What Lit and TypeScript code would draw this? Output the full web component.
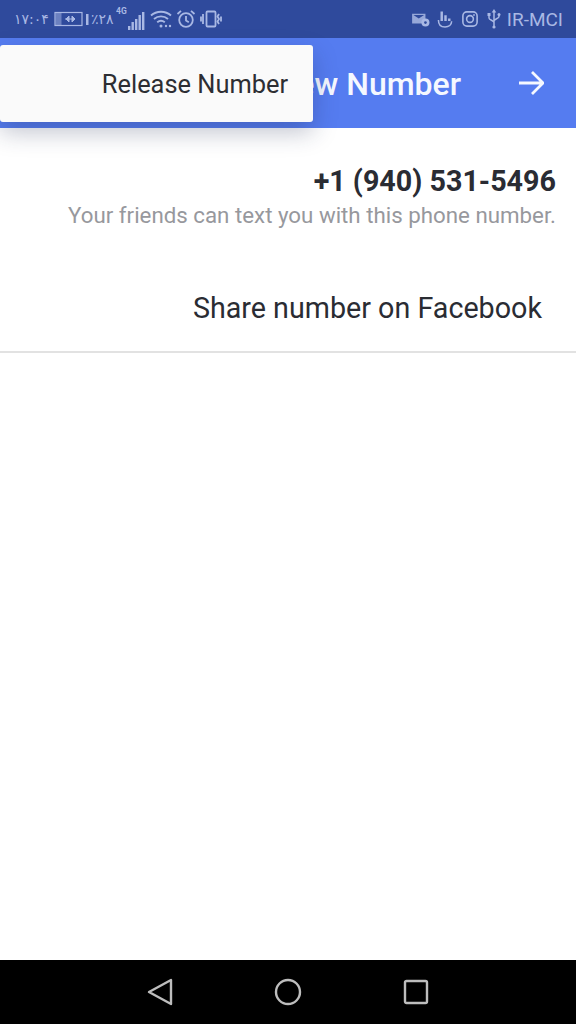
import { LitElement, html, css } from 'lit';
import { customElement } from 'lit/decorators.js';

@customElement('app-root')
export class AppRoot extends LitElement {
    static styles = css`
        :host {
            display: block;
            width: 576px;
            height: 1024px;
            font-family: Roboto, sans-serif;
        }

        * {
            box-sizing: border-box;
        }

        .page {
            position: relative;
            display: flex;
            flex-direction: column;
            height: 1024px;
            overflow: hidden;
            background: #fff;
        }

        .status {
            display: flex;
            align-items: center;
            justify-content: space-between;
            height: 38px;
            padding: 0 13px 0 14px;
            background: #2f4a9c;
            color: #a9b8e4;
        }

        .status svg {
            display: block;
            flex: none;
        }

        .group {
            display: flex;
            align-items: center;
        }

        .digits {
            font-family: 'DejaVu Sans', sans-serif;
            font-size: 14px;
            white-space: nowrap;
        }

        .time {
            width: 31px;
            margin-right: 9px;
            letter-spacing: -0.6px;
        }

        .pct {
            width: 24px;
            margin-left: 1px;
            letter-spacing: -0.5px;
        }

        .carrier {
            font-size: 19px;
            margin-left: 6px;
        }

        .appbar {
            display: flex;
            align-items: center;
            justify-content: flex-end;
            height: 90px;
            padding: 2px 32px 0 0;
            background: #557cf0;
            color: #f5f8ff;
        }

        .appbar h1 {
            margin: 0 57px 0 0;
            font-size: 32px;
            font-weight: 500;
        }

        .appbar svg {
            margin-top: -2px;
        }

        .content {
            flex: 1;
            background: #fff;
        }

        .info {
            padding: 34px 20px 0 0;
            text-align: right;
        }

        .phone {
            font-size: 28.7px;
            font-weight: 700;
            line-height: 38px;
            color: #2a2c33;
        }

        .hint {
            font-size: 22.3px;
            line-height: 30px;
            color: #97989d;
        }

        .share {
            display: flex;
            align-items: center;
            justify-content: flex-end;
            height: 95px;
            margin-top: 28px;
            padding: 6px 34px 0 0;
            border-bottom: 2px solid #e2e2e2;
            font-size: 28.7px;
            color: #2a2c33;
        }

        .nav {
            display: flex;
            align-items: center;
            justify-content: center;
            gap: 101px;
            height: 64px;
            background: #000;
        }

        .menu {
            position: absolute;
            top: 45px;
            left: 0;
            display: flex;
            align-items: center;
            justify-content: flex-end;
            width: 313px;
            height: 77px;
            padding: 0 25px 0 0;
            border-radius: 3px;
            background: #fafafa;
            box-shadow: 0 10px 24px rgba(30, 40, 80, 0.28);
            font-size: 25.4px;
            color: #2d2e33;
        }
    `;

    render() {
        return html`
            <div class="page">
                <div class="status">
                    <div class="group">
                        <span class="digits time">۱۷:۰۴</span>
                        <svg width="30" height="16" viewBox="0 0 30 16" fill="none" stroke="currentColor">
                            <rect x="1" y="1.500" width="27" height="13" stroke-width="1.200" />
                            <rect x="1.500" y="2" width="6" height="12" fill="currentColor" stroke="none" opacity=".5" />
                            <path d="M11 8h10M15 5l-3 3 3 3zM18 5l3 3-3 3z" fill="currentColor" stroke-width="1" />
                        </svg>
                        <svg width="5" height="16" viewBox="0 0 5 16" style="margin-left:1px">
                            <rect x="1" y="3" width="2.500" height="11" fill="currentColor" />
                        </svg>
                        <span class="digits pct">٪۲۸</span>
                        <svg width="30" height="26" viewBox="0 0 30 26" fill="currentColor" style="margin-left:1px">
                            <text x="0" y="8" font-size="8.500" font-weight="700" font-family="Roboto">4G</text>
                            <rect x="12" y="20" width="2.400" height="4" />
                            <rect x="15.500" y="16" width="2.400" height="8" />
                            <rect x="19" y="13" width="2.400" height="11" />
                            <rect x="22.500" y="9" width="2.400" height="15" />
                            <rect x="26" y="6" width="2.400" height="18" />
                        </svg>
                        <svg width="22" height="20" viewBox="0 0 22 20" fill="none" stroke="currentColor" stroke-width="1.900" style="margin-left:4px">
                            <path d="M1 6.500C6.500 1.500 15.500 1.500 21 6.500M4 10c4-3.500 10-3.500 14 0M7.200 13.200c2.200-1.800 5.400-1.800 7.600 0" />
                            <circle cx="11" cy="17" r="1.500" fill="currentColor" stroke="none" />
                            <circle cx="16" cy="17" r="1.200" fill="currentColor" stroke="none" />
                            <circle cx="20" cy="17" r="1.200" fill="currentColor" stroke="none" />
                        </svg>
                        <svg width="20" height="20" viewBox="0 0 20 20" fill="none" stroke="currentColor" stroke-width="1.800" style="margin-left:4px">
                            <circle cx="10" cy="11" r="6.800" />
                            <path d="M10 7v4.500l2.800 1.700M1.500 5L5 1.800M18.500 5L15 1.800" />
                        </svg>
                        <svg width="22" height="18" viewBox="0 0 22 18" fill="none" stroke="currentColor" stroke-width="1.800" style="margin-left:4px">
                            <rect x="6.500" y="1.500" width="9" height="15" rx="1" />
                            <path d="M3 4v10M1 6.500v5M19 4l-1.500 2.500L19 9l-1.500 2.500L19 14M21 6.500v5" />
                        </svg>
                    </div>
                    <div class="group">
                        <svg width="18" height="16" viewBox="0 0 20 18" fill="currentColor">
                            <path d="M0 3h15v6.500a5 5 0 0 0-4 4.500H0zM1.500 4.500l6 4 6-4" opacity=".85" />
                            <circle cx="15" cy="13" r="4.500" />
                            <circle cx="15" cy="13" r="1.500" fill="#2f4a9c" />
                        </svg>
                        <svg width="17" height="22" viewBox="0 0 18 22" fill="none" stroke="currentColor" stroke-width="1.600" style="margin-left:7px">
                            <path d="M1.500 12c0 5 3 7.500 7 7.500s7-2.500 7-6" />
                            <path d="M5 3v10M9 7v6M13 10.500v2.500" stroke-width="2.600" />
                        </svg>
                        <svg width="16" height="16" viewBox="0 0 18 18" fill="none" stroke="currentColor" stroke-width="1.800" style="margin-left:8px">
                            <rect x="1" y="1" width="16" height="16" rx="4.500" />
                            <circle cx="9" cy="9" r="3.800" />
                            <circle cx="13.500" cy="4.500" r="1" fill="currentColor" stroke="none" />
                        </svg>
                        <svg width="14" height="20" viewBox="0 0 14 20" fill="none" stroke="currentColor" stroke-width="1.500" style="margin-left:9px">
                            <path d="M7 3v15M2 6v3c0 2 5 2.500 5 4.500M12 6v1.500c0 2-5 2.500-5 4.500" />
                            <path d="M7 0l2.300 3.500H4.700z" fill="currentColor" stroke="none" />
                            <circle cx="7" cy="18" r="1.600" fill="currentColor" stroke="none" />
                            <rect x=".5" y="4" width="3" height="3" fill="currentColor" stroke="none" />
                            <circle cx="12" cy="5.500" r="1.500" fill="currentColor" stroke="none" />
                        </svg>
                        <span class="carrier">IR-MCI</span>
                    </div>
                </div>
                <div class="appbar">
                    <h1>New Number</h1>
                    <svg width="26" height="26" viewBox="0 0 26 26" fill="none" stroke="currentColor" stroke-width="2.800">
                        <path d="M1 13h23M14 2l11 11-11 11" />
                    </svg>
                </div>
                <div class="content">
                    <div class="info">
                        <div class="phone">+1 (940) 531-5496</div>
                        <div class="hint">Your friends can text you with this phone number.</div>
                    </div>
                    <div class="share">Share number on Facebook</div>
                </div>
                <div class="nav">
                    <svg width="26" height="28" viewBox="0 0 26 28" fill="none" stroke="#bdbdbd" stroke-width="2.400" stroke-linejoin="round">
                        <path d="M24 2v24L2 14z" />
                    </svg>
                    <svg width="28" height="28" viewBox="0 0 28 28" fill="none" stroke="#bdbdbd" stroke-width="2.400">
                        <circle cx="14" cy="14" r="12" />
                    </svg>
                    <svg width="26" height="26" viewBox="0 0 26 26" fill="none" stroke="#bdbdbd" stroke-width="2.400" stroke-linejoin="round">
                        <rect x="2" y="2" width="22" height="22" rx="1.500" />
                    </svg>
                </div>
                <div class="menu">Release Number</div>
            </div>
        `;
    }
}
